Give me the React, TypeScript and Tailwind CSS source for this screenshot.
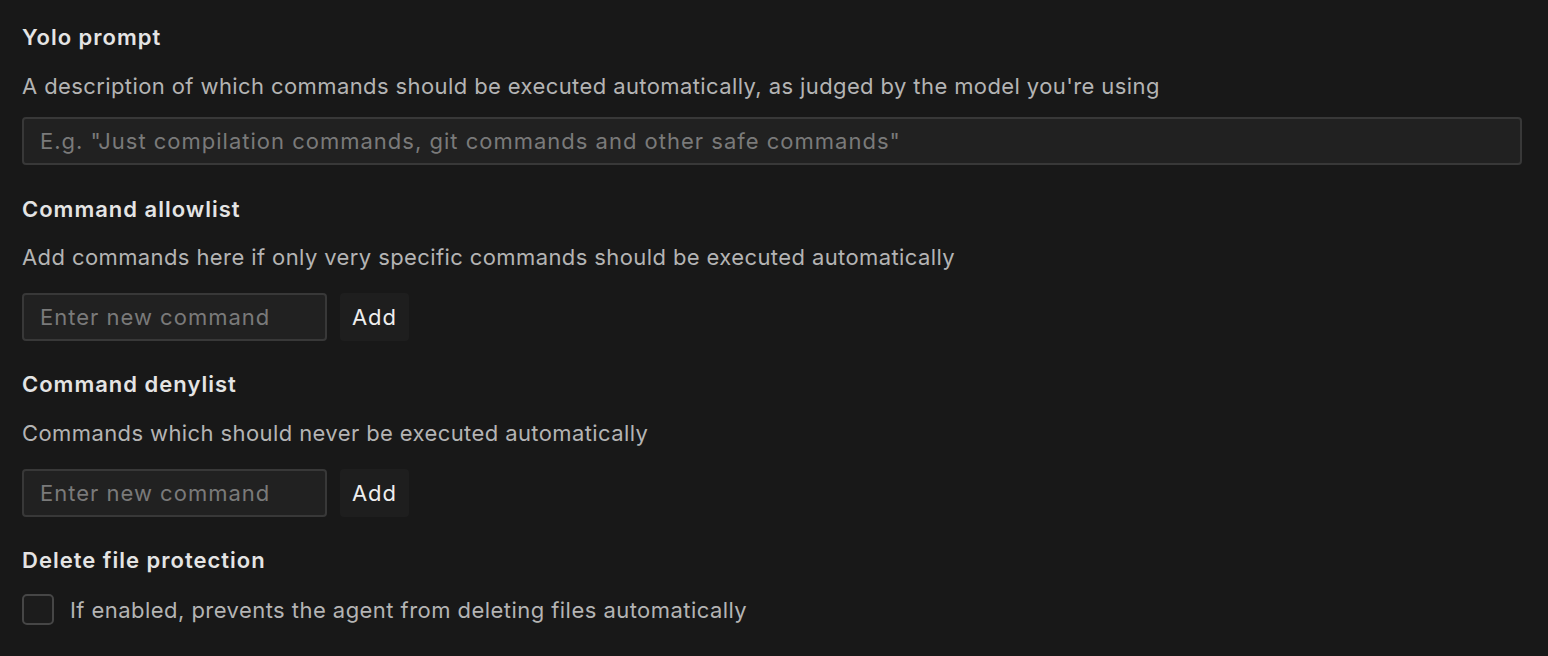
import React from "react";

const font = { fontFamily: "Inter, 'Noto Sans', sans-serif" };

function Heading({ children }: { children: React.ReactNode }) {
  return (
    <div className="h-[28px] leading-[28px] text-[22px] font-semibold tracking-[1px] text-[#e4e4e4] whitespace-nowrap">
      {children}
    </div>
  );
}

function Desc({ children }: { children: React.ReactNode }) {
  return (
    <div className="h-[28px] leading-[28px] text-[22px] tracking-[0.4px] text-[#b4b4b4] whitespace-nowrap">
      {children}
    </div>
  );
}

function CommandInput() {
  return (
    <div className="flex gap-[13px]">
      <input
        placeholder="Enter new command"
        className="w-[305px] h-[48px] rounded-[4px] border-2 border-[#383838] bg-[#212121] px-[16px] text-[22px] tracking-[1px] text-[#e4e4e4] placeholder:text-[#7a7a7a] outline-none"
      />
      <button className="w-[69px] h-[48px] rounded-[4px] bg-[#1e1e1e] text-[22px] tracking-[1px] text-[#eeeeee]">
        Add
      </button>
    </div>
  );
}

export default function App() {
  return (
    <div className="w-[1548px] h-[656px] bg-[#181818] pl-[22px] pt-[23px] overflow-hidden" style={font}>
      <Heading>Yolo prompt</Heading>
      <div className="mt-[21px]">
        <Desc>A description of which commands should be executed automatically, as judged by the model you're using</Desc>
      </div>
      <input
        placeholder={'E.g. "Just compilation commands, git commands and other safe commands"'}
        className="mt-[17px] block w-[1500px] h-[48px] rounded-[4px] border-2 border-[#383838] bg-[#212121] px-[16px] text-[22px] tracking-[1px] text-[#e4e4e4] placeholder:text-[#7a7a7a] outline-none"
      />
      <div className="mt-[30px]">
        <Heading>Command allowlist</Heading>
      </div>
      <div className="mt-[20px]">
        <Desc>Add commands here if only very specific commands should be executed automatically</Desc>
      </div>
      <div className="mt-[22px]">
        <CommandInput />
      </div>
      <div className="mt-[29px]">
        <Heading>Command denylist</Heading>
      </div>
      <div className="mt-[21px]">
        <Desc>Commands which should never be executed automatically</Desc>
      </div>
      <div className="mt-[22px]">
        <CommandInput />
      </div>
      <div className="mt-[29px]">
        <Heading>Delete file protection</Heading>
      </div>
      <div className="mt-[20px] flex items-center gap-[16px]">
        <div className="w-[32px] h-[31px] rounded-[5px] border-2 border-[#464646] bg-[#1c1c1c]" />
        <span className="text-[22px] leading-[28px] tracking-[0.45px] text-[#b4b4b4] whitespace-nowrap">
          If enabled, prevents the agent from deleting files automatically
        </span>
      </div>
    </div>
  );
}
